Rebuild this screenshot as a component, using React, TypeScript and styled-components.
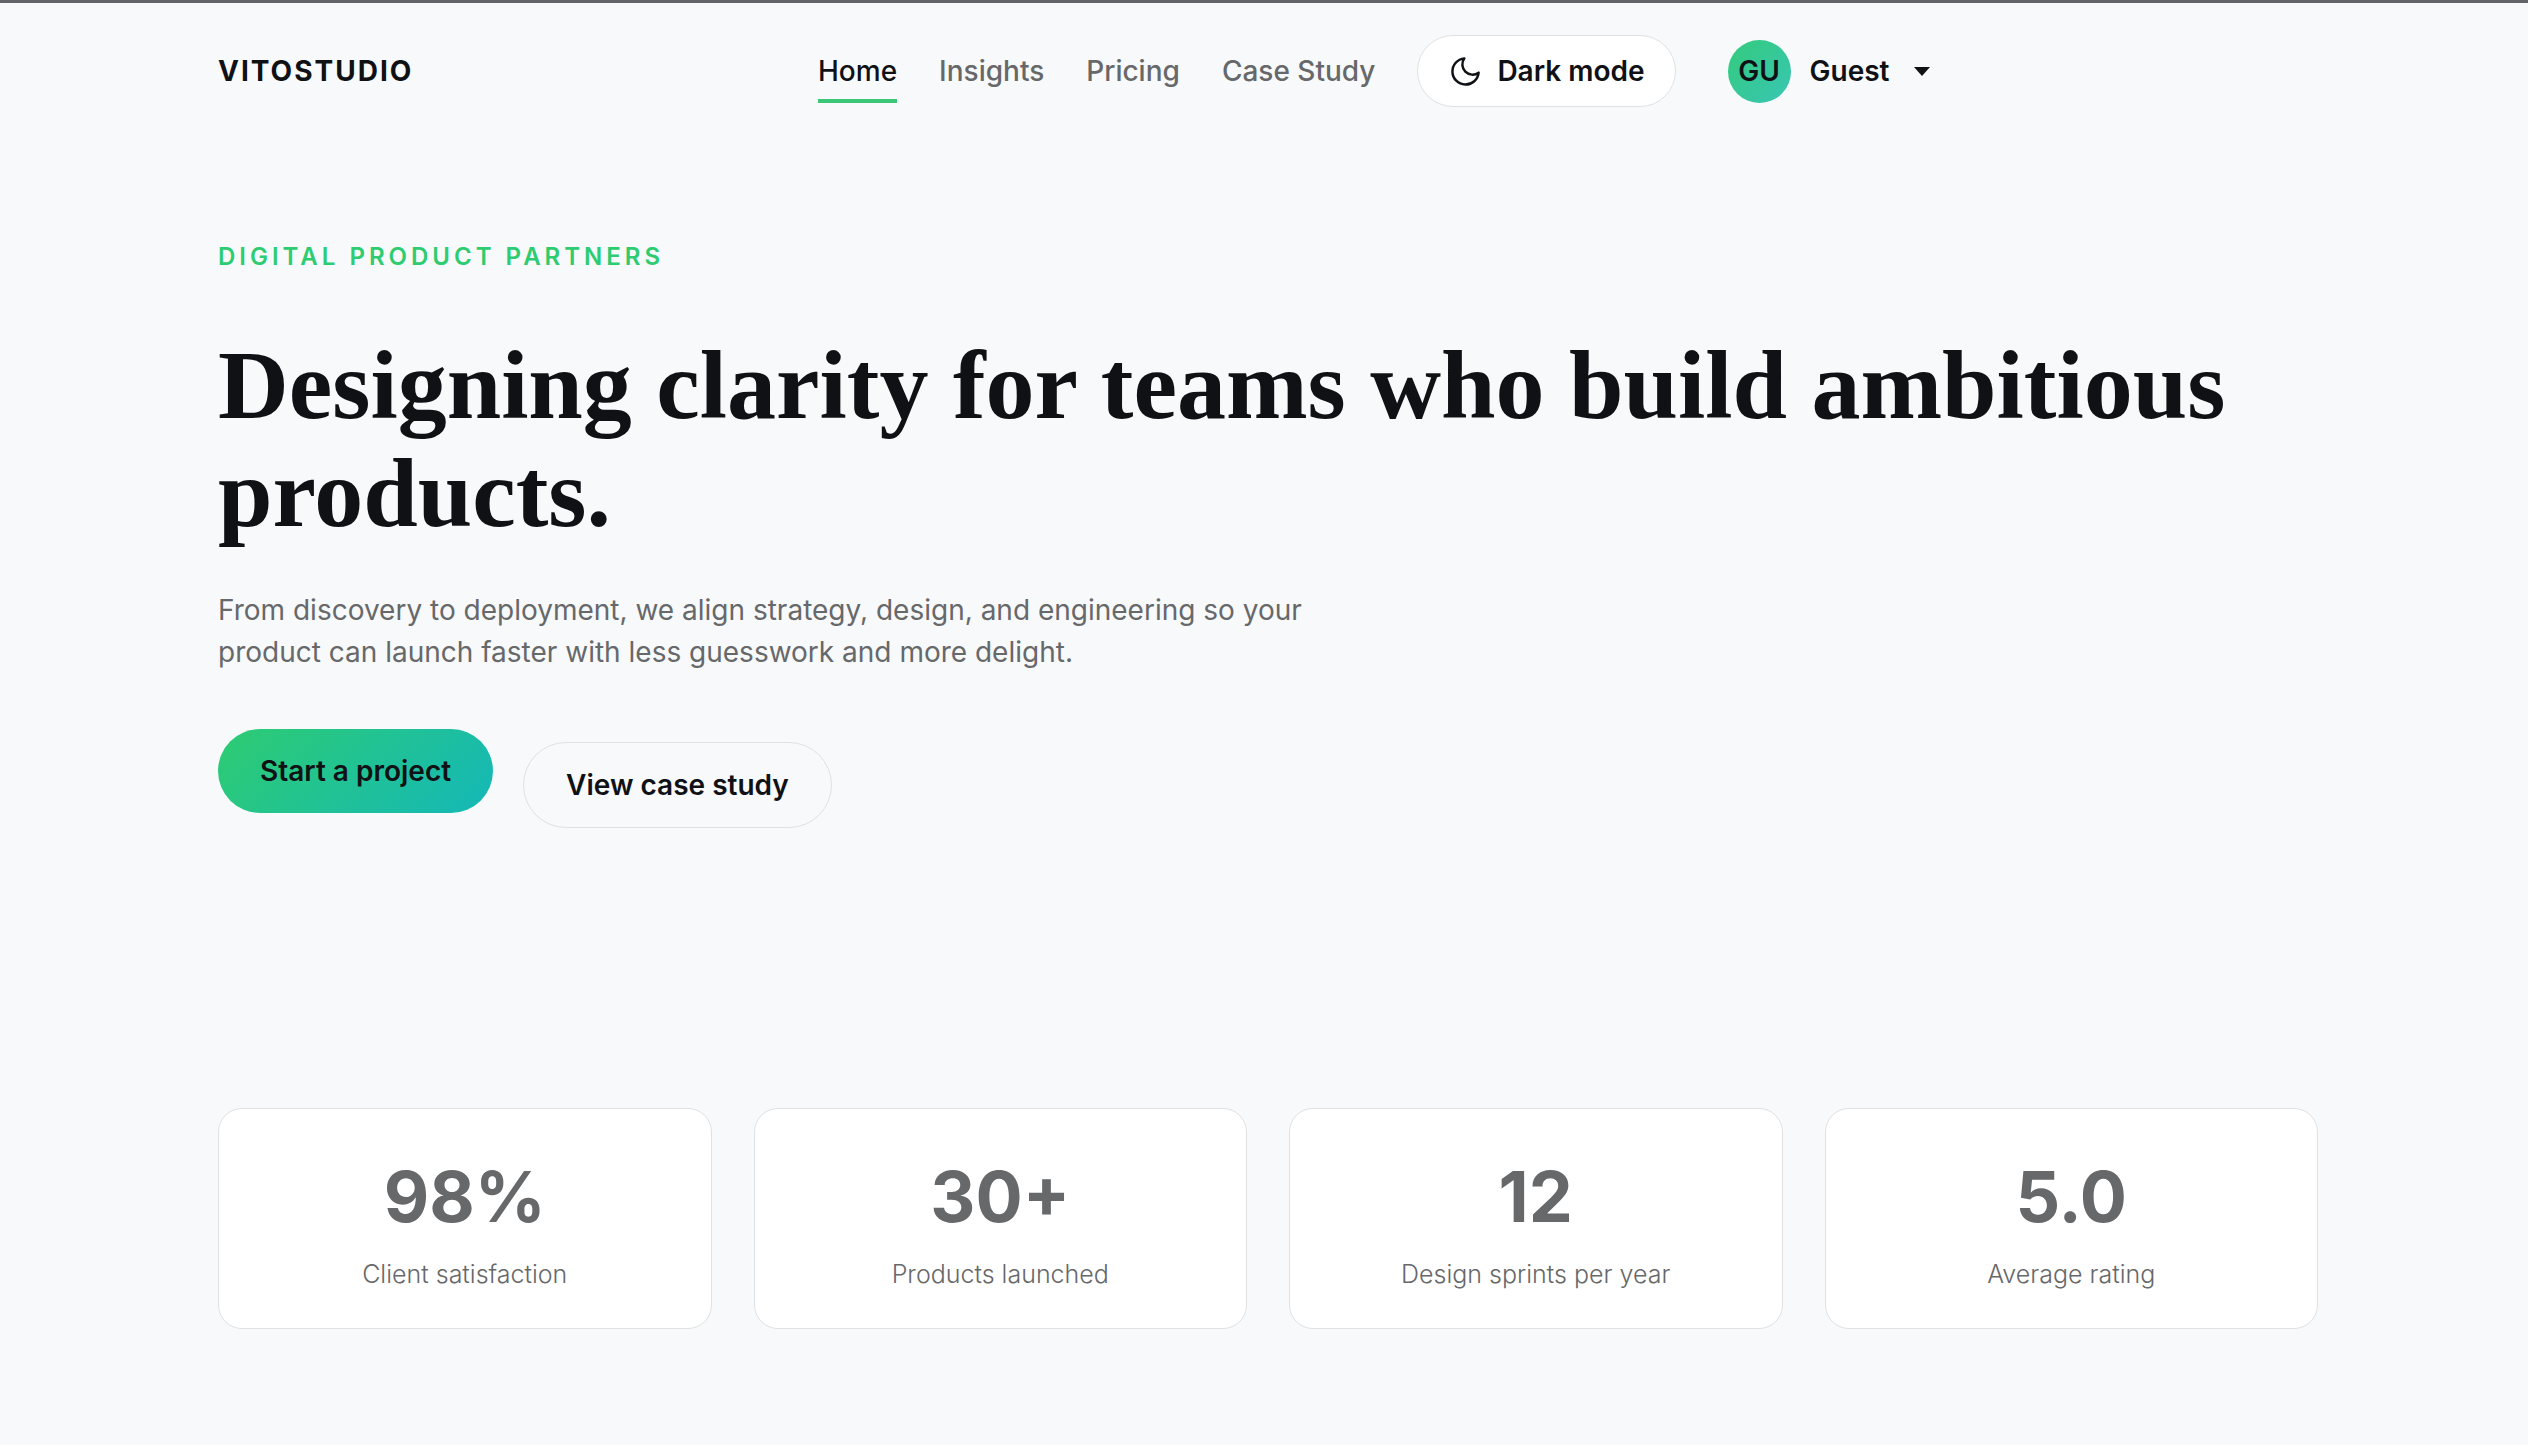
import React from "react";
import styled, { createGlobalStyle } from "styled-components";

const GlobalStyle = createGlobalStyle`
  *, *::before, *::after { box-sizing: border-box; }
  body {
    margin: 0;
    background: #f7f9fb;
    color: #0f1114;
    font-family: Inter, "Liberation Sans", sans-serif;
    font-size: 28px;
    line-height: 42px;
  }
  h1, p, dl, dt, dd { margin: 0; padding: 0; }
  button { font: inherit; color: inherit; cursor: pointer; }
  a { color: inherit; text-decoration: none; }
`;

const Page = styled.div`
  border-top: 3px solid #626467;
  padding-left: 8px;
`;

const Container = styled.div`
  width: 100%;
  max-width: 2100px;
  margin: 0 auto;
`;

const Header = styled.header`
  padding: 32px 0;
`;

const HeaderRow = styled(Container)`
  display: grid;
  grid-template-columns: 600px 1fr;
  align-items: center;
`;

const Brand = styled.a`
  font-weight: 700;
  letter-spacing: 2px;
`;

const Nav = styled.nav`
  display: flex;
  align-items: center;
  gap: 42px;
`;

const NavLink = styled.a<{ $active?: boolean }>`
  padding: 11px 0 7px;
  font-weight: 500;
  color: ${(p) => (p.$active ? "#0f1114" : "#67686a")};
  border-bottom: 4px solid ${(p) => (p.$active ? "#3cc678" : "transparent")};
`;

const ThemeButton = styled.button`
  display: flex;
  align-items: center;
  gap: 14px;
  height: 72px;
  padding: 0 30px;
  background: #fff;
  border: 1px solid #dfe2e4;
  border-radius: 36px;
  font-weight: 600;
`;

const MoonIcon = styled.svg`
  width: 35px;
  height: 35px;
  fill: none;
  stroke: currentColor;
  stroke-width: 1.7;
  stroke-linecap: round;
  stroke-linejoin: round;
`;

const Account = styled.button`
  display: flex;
  align-items: center;
  gap: 19px;
  margin-left: 10px;
  padding: 0;
  border: 0;
  background: none;
  font-weight: 600;
`;

const Avatar = styled.span`
  display: grid;
  place-items: center;
  width: 63px;
  height: 63px;
  border-radius: 50%;
  background: linear-gradient(135deg, #34cb7c, #38c6b4);
`;

const Caret = styled.svg`
  width: 16px;
  height: 9px;
  margin-left: 6px;
`;

const Hero = styled.section`
  padding: 98px 0 280px;
`;

const Eyebrow = styled.p`
  margin-bottom: 54px;
  font-size: 24px;
  line-height: 40px;
  font-weight: 600;
  letter-spacing: 4px;
  text-transform: uppercase;
  color: #2ecc71;
`;

const Title = styled.h1`
  margin-bottom: 42px;
  font-family: "Liberation Serif", serif;
  font-size: 98px;
  line-height: 108px;
  font-weight: 700;
`;

const Lead = styled.p`
  max-width: 1120px;
  margin-bottom: 56px;
  color: #67686a;
`;

const Actions = styled.div`
  display: flex;
  align-items: flex-start;
  gap: 30px;
`;

const PrimaryButton = styled.button`
  padding: 21px 42px;
  border: 0;
  border-radius: 42px;
  background: linear-gradient(135deg, #2ecc71, #14b8b8);
  font-weight: 600;
`;

const OutlineButton = styled(PrimaryButton)`
  margin-top: 13px;
  border: 1px solid #dfe2e4;
  border-radius: 43px;
  background: none;
`;

const Stats = styled.dl`
  display: grid;
  grid-template-columns: repeat(4, 1fr);
  gap: 42px;
  padding-bottom: 112px;
`;

const StatCard = styled.div`
  display: flex;
  flex-direction: column-reverse;
  gap: 6px;
  padding: 35px;
  background: #fff;
  border: 1px solid #dfe2e4;
  border-radius: 24px;
  color: #67686a;
  text-align: center;
`;

const StatLabel = styled.dt`
  font-size: 25px;
  line-height: 38px;
  font-weight: 300;
`;

const StatValue = styled.dd`
  font-size: 70px;
  line-height: 105px;
  font-weight: 700;
`;

const links = ["Home", "Insights", "Pricing", "Case Study"];

const stats = [
  { value: "98%", label: "Client satisfaction" },
  { value: "30+", label: "Products launched" },
  { value: "12", label: "Design sprints per year" },
  { value: "5.0", label: "Average rating" },
];

export default function App() {
  return (
    <Page>
      <GlobalStyle />
      <Header>
        <HeaderRow>
          <Brand href="#">VITOSTUDIO</Brand>
          <Nav aria-label="Main">
            {links.map((label, i) => (
              <NavLink key={label} href="#" $active={i === 0}>
                {label}
              </NavLink>
            ))}
            <ThemeButton type="button">
              <MoonIcon viewBox="0 0 24 24" aria-hidden>
                <path d="M21 12.79A9 9 0 1 1 11.21 3 7 7 0 0 0 21 12.79z" />
              </MoonIcon>
              Dark mode
            </ThemeButton>
            <Account type="button">
              <Avatar>GU</Avatar>
              Guest
              <Caret viewBox="0 0 16 9" aria-hidden>
                <path d="M0 0h16L8 9z" fill="currentColor" />
              </Caret>
            </Account>
          </Nav>
        </HeaderRow>
      </Header>
      <Container as="main">
        <Hero>
          <Eyebrow>Digital product partners</Eyebrow>
          <Title>Designing clarity for teams who build ambitious products.</Title>
          <Lead>
            From discovery to deployment, we align strategy, design, and engineering so your
            product can launch faster with less guesswork and more delight.
          </Lead>
          <Actions>
            <PrimaryButton type="button">Start a project</PrimaryButton>
            <OutlineButton type="button">View case study</OutlineButton>
          </Actions>
        </Hero>
        <Stats>
          {stats.map((s) => (
            <StatCard key={s.label}>
              <StatLabel>{s.label}</StatLabel>
              <StatValue>{s.value}</StatValue>
            </StatCard>
          ))}
        </Stats>
      </Container>
    </Page>
  );
}
